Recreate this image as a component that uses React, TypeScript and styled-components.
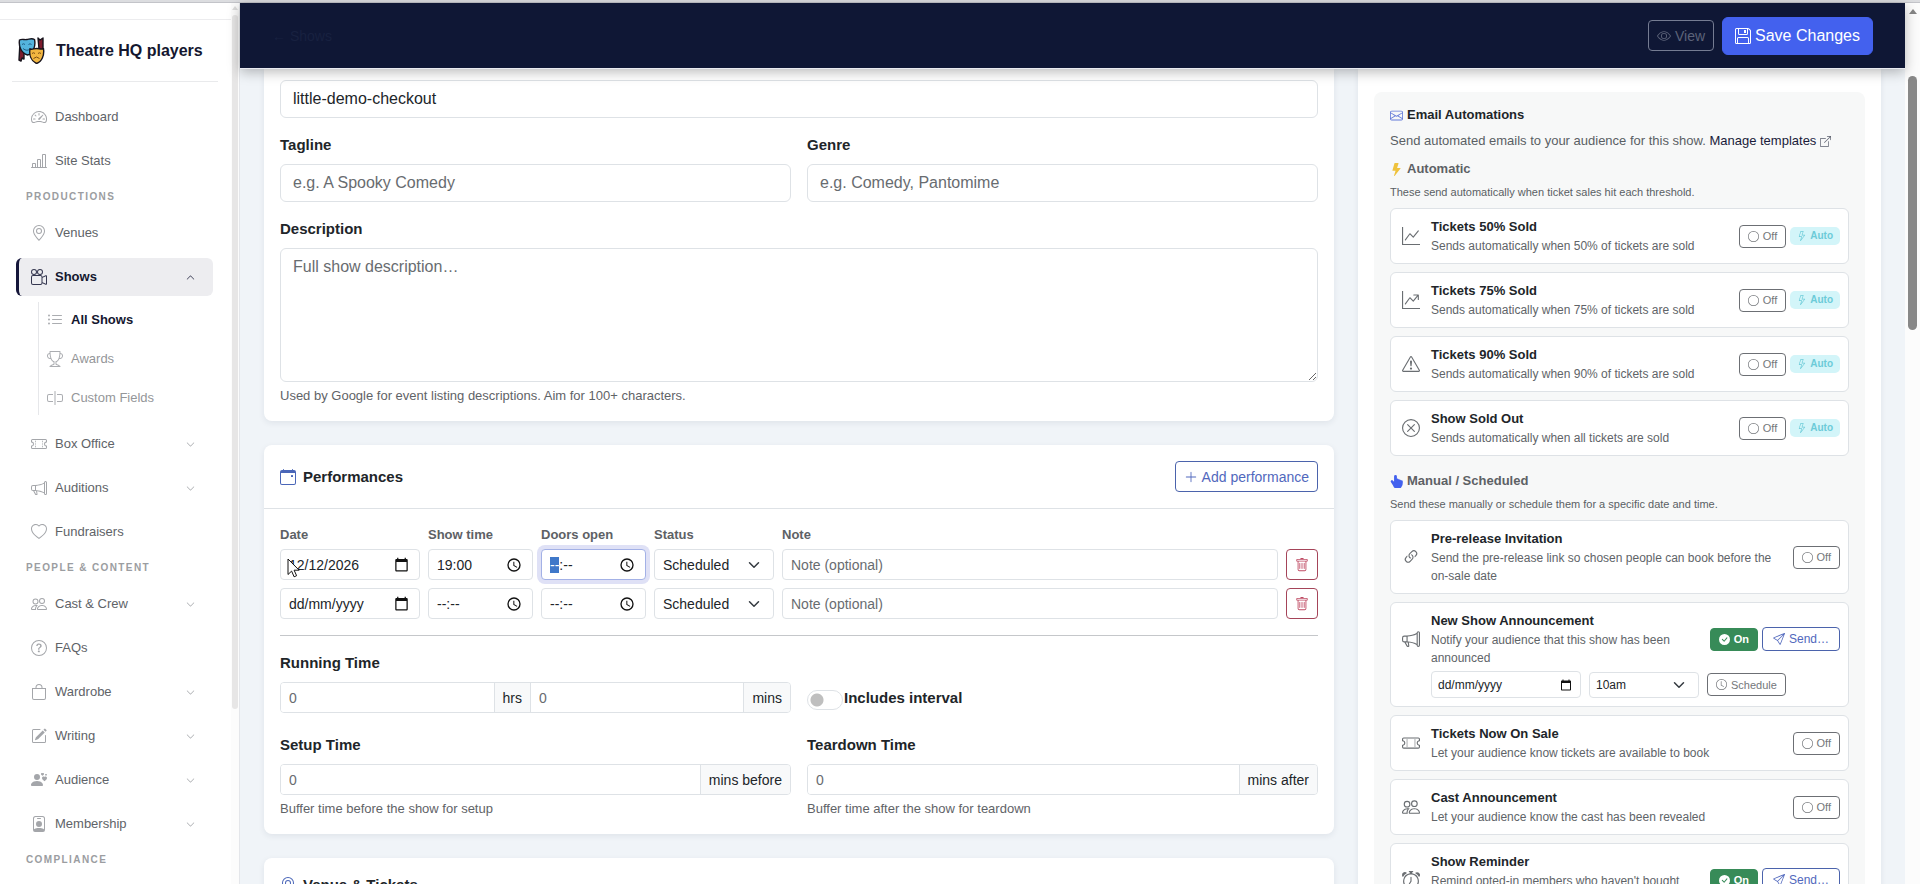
import React, { useEffect, useRef } from 'react';
import styled, { createGlobalStyle, css } from 'styled-components';
import type { IconType } from 'react-icons';
import {
  BsAlarm, BsBag, BsBarChartLine, BsBoxArrowUpRight, BsCalendarEvent, BsCameraReels, BsCheckCircleFill,
  BsChevronDown, BsChevronUp, BsCircle, BsClock, BsEnvelope, BsExclamationTriangle, BsEye, BsFloppy,
  BsGeoAlt, BsGraphUp, BsGraphUpArrow, BsHandIndexThumbFill, BsHeart, BsInputCursor, BsLightning,
  BsLightningFill, BsLink45Deg, BsListUl, BsMegaphone, BsPencilSquare, BsPeople, BsPersonBadge,
  BsPersonHearts, BsPlusLg, BsQuestionCircle, BsSend, BsSpeedometer2, BsTicketPerforated, BsTrash,
  BsTrophy, BsXCircle,
} from 'react-icons/bs';

const c = {
  navy: '#0f1735',
  blue: '#4361ee',
  ink: '#212529',
  muted: '#5a5f64',
  line: '#dee2e6',
  page: '#f0f4f8',
};

const GlobalStyle = createGlobalStyle`
  *, *::before, *::after { box-sizing: border-box; }
  body { margin: 0; background: ${c.page}; color: ${c.ink}; font-family: "Liberation Sans", Arial, sans-serif; font-size: 16px; line-height: 24px; overflow: hidden; }
  button, input, select, textarea { font-family: inherit; color: inherit; margin: 0; }
  button { cursor: pointer; }
  h1, h2, h3, p, ul { margin: 0; padding: 0; }
  ul { list-style: none; }
  svg { display: block; flex: none; }
`;

/* ---------- page frame ---------- */
const Shell = styled.div`
  height: 100vh;
  display: flex;
  flex-direction: column;
  overflow: hidden;
`;
const WindowEdge = styled.div`
  flex: none;
  height: 3px;
  background: #dcdde0;
  border-bottom: 1px solid #c3c4c9;
`;
const Columns = styled.div`
  flex: 1;
  min-height: 0;
  display: flex;
`;
const Main = styled.main`
  flex: 1;
  min-width: 0;
  display: flex;
  flex-direction: column;
`;

/* ---------- scroll indicators ---------- */
const Track = styled.div<{ $wide?: boolean }>`
  flex: none;
  width: ${p => (p.$wide ? 15 : 8)}px;
  background: #fcfcfc;
  display: flex;
  flex-direction: column;
  align-items: center;
  padding-top: ${p => (p.$wide ? 6 : 3)}px;
`;
const Arrow = styled.span<{ $wide?: boolean }>`
  border: solid transparent;
  border-width: 0 ${p => (p.$wide ? '4px 5px' : '3px 4px')};
  border-bottom-color: ${p => (p.$wide ? '#858585' : '#dcdcdc')};
`;
const Thumb = styled.span<{ $wide?: boolean }>`
  width: ${p => (p.$wide ? 9 : 6)}px;
  height: ${p => (p.$wide ? '29%' : '79%')};
  margin-top: ${p => (p.$wide ? 62 : 5)}px;
  border-radius: 5px;
  background: ${p => (p.$wide ? '#888888' : '#e7e6e6')};
`;

/* ---------- sidebar ---------- */
const Sidebar = styled.aside`
  flex: none;
  width: 240px;
  display: flex;
  background: #fff;
  border-right: 1px solid #e4e6ea;
`;
const SideBody = styled.div`
  flex: 1;
  min-width: 0;
  overflow: hidden;
  padding-top: 16px;
`;
const Brand = styled.h1`
  display: flex;
  align-items: center;
  gap: 11px;
  height: 62px;
  padding-left: 6px;
  margin: 0 13px 0 12px;
  border-bottom: 1px solid #e9eaec;
  font-size: 16px;
  color: #14172f;
`;
const BrandRule = styled.div`
  height: 1px;
  background: #ececee;
`;
const NavList = styled.ul`
  display: flex;
  flex-direction: column;
  gap: 6px;
  padding: 16px 18px 0 16px;
`;
const NavLink = styled.a<{ $active?: boolean }>`
  display: flex;
  align-items: center;
  gap: 8px;
  height: 38px;
  padding: 0 18px 0 12px;
  border-left: 3px solid transparent;
  border-radius: 6px;
  font-size: 13px;
  color: #606368;
  text-decoration: none;
  svg { color: #a4a6aa; }
  ${p => p.$active && css`
    background: #ededf0;
    border-left-color: #15163a;
    color: #14172f;
    font-weight: bold;
    svg { color: #34364f; }
  `}
`;
const NavText = styled.span`
  flex: 1;
`;
const NavHeading = styled.li`
  padding-left: 10px;
  font-size: 10px;
  line-height: 22px;
  font-weight: bold;
  letter-spacing: 0.14em;
  text-transform: uppercase;
  color: #9b9da1;
`;
const SubList = styled.ul`
  display: flex;
  flex-direction: column;
  gap: 4px;
  margin: 6px 0 4px 22px;
  padding-left: 8px;
  border-left: 1px solid #e6e7ea;
`;
const SubLink = styled.a<{ $active?: boolean }>`
  display: flex;
  align-items: center;
  gap: 8px;
  height: 35px;
  font-size: 13px;
  color: ${p => (p.$active ? '#14172f' : '#949699')};
  font-weight: ${p => (p.$active ? 'bold' : 'normal')};
  text-decoration: none;
  svg { color: #abadb1; }
`;

/* ---------- header bar ---------- */
const TopBar = styled.header`
  position: relative;
  z-index: 1;
  flex: none;
  display: flex;
  align-items: center;
  justify-content: space-between;
  height: 66px;
  padding: 0 32px;
  background: ${c.navy};
  border-bottom: 1px solid #e8eaf0;
  box-shadow: 0 3px 12px rgba(0, 0, 0, 0.28);
`;
const Crumb = styled.a`
  font-size: 14px;
  color: #182140;
  text-decoration: none;
`;
const Actions = styled.div`
  display: flex;
  align-items: center;
  gap: 8px;
`;
type Tone = 'ghost' | 'solid' | 'blue' | 'red' | 'gray' | 'green';
const tones: Record<Tone, [string, string, string]> = {
  ghost: ['#5c6379', '#757c92', 'transparent'],
  solid: ['#ffffff', c.blue, c.blue],
  blue: ['#5168bd', '#4b63ac', '#fff'],
  red: ['#bf4a63', '#a54459', '#fff'],
  gray: ['#74777b', '#6c6f74', '#fff'],
  green: ['#ffffff', '#378b58', '#378b58'],
};
const Button = styled.button<{ $tone: Tone; $size: 'lg' | 'md' | 'sm' | 'xs' }>`
  display: inline-flex;
  align-items: center;
  justify-content: center;
  gap: 4px;
  flex: none;
  white-space: nowrap;
  color: ${p => tones[p.$tone][0]};
  border: 1px solid ${p => tones[p.$tone][1]};
  background: ${p => tones[p.$tone][2]};
  font-weight: ${p => (p.$tone === 'green' ? 'bold' : 'normal')};
  ${p => p.$size === 'lg' && css`height: 38px; padding: 0 12px; font-size: 16px; border-radius: 6px;`}
  ${p => p.$size === 'md' && css`height: 31px; padding: 0 8px; font-size: 14px; border-radius: 4px;`}
  ${p => p.$size === 'sm' && css`height: 24px; padding: 0 10px; font-size: 12px; border-radius: 4px;`}
  ${p => p.$size === 'xs' && css`height: 23px; padding: 0 8px; font-size: 11px; border-radius: 4px;`}
`;

/* ---------- content ---------- */
const Scroll = styled.div`
  flex: 1;
  min-height: 0;
  overflow: hidden;
  padding: 0 12px;
`;
const Row = styled.div`
  display: flex;
  align-items: flex-start;
`;
const FormColumn = styled.div`
  flex: 0 0 66.6667%;
  min-width: 0;
  padding: 0 12px;
  display: flex;
  flex-direction: column;
  gap: 24px;
`;
const SideColumn = styled.div`
  flex: 1;
  min-width: 0;
  padding: 0 12px;
`;
const Card = styled.section<{ $open?: boolean }>`
  background: #fff;
  border-radius: ${p => (p.$open ? '0 0 8px 8px' : '8px')};
  box-shadow: 0 2px 6px rgba(30, 40, 60, 0.08);
`;
const CardHeader = styled.div`
  display: flex;
  align-items: center;
  gap: 7px;
  padding: 16px;
  border-bottom: 1px solid ${c.line};
  > svg { color: #4a66b8; }
`;
const CardTitle = styled.h2`
  flex: 1;
  font-size: 15px;
  line-height: 22px;
`;
const CardBody = styled.div<{ $top?: number }>`
  padding: ${p => p.$top ?? 16}px 16px 16px;
`;
const Split = styled.div`
  display: grid;
  grid-template-columns: 1fr 1fr;
  column-gap: 16px;
  margin: 16px 0;
`;
const Field = styled.div`
  display: flex;
  flex-direction: column;
`;
const Label = styled.label`
  margin-bottom: 8px;
  font-size: 15px;
  line-height: 22px;
  font-weight: bold;
`;
const Help = styled.p`
  margin-top: 4px;
  font-size: 13px;
  line-height: 19px;
  color: #5f6367;
`;
const box = css`
  width: 100%;
  min-width: 0;
  background: #fff;
  border: 1px solid ${c.line};
  outline: none;
  &::placeholder { color: #686c70; opacity: 1; }
`;
const Input = styled.input`
  ${box}
  height: 38px;
  padding: 0 12px;
  border-radius: 6px;
  font-size: 16px;
`;
const Area = styled.textarea`
  ${box}
  display: block;
  height: 134px;
  padding: 6px 12px;
  border-radius: 6px;
  font-size: 16px;
  line-height: 24px;
  resize: vertical;
`;
const SmallInput = styled.input<{ $mini?: boolean }>`
  ${box}
  height: ${p => (p.$mini ? 27 : 31)}px;
  padding: 0 ${p => (p.$mini ? 6 : 8)}px;
  border-radius: 4px;
  font-size: ${p => (p.$mini ? 12 : 14)}px;
  &:focus { border-color: #a3b1e6; box-shadow: 0 0 0 4px #dfe1f6; }
  &::selection { background: #3f78c9; color: #fff; }
`;
const SmallSelect = styled.select<{ $mini?: boolean }>`
  ${box}
  appearance: none;
  height: ${p => (p.$mini ? 26 : 31)}px;
  padding: 0 ${p => (p.$mini ? 6 : 8)}px;
  border-radius: 4px;
  font-size: ${p => (p.$mini ? 12 : 14)}px;
`;
/* stacks a control and its trailing glyph in one grid cell */
const Stack = styled.div<{ $inset?: number; $width?: number }>`
  position: relative;
  display: grid;
  align-items: center;
  ${p => p.$width && css`width: ${p.$width}px; flex: none;`}
  > input, > select { grid-area: 1 / 1; }
  > svg { grid-area: 1 / 1; justify-self: end; margin-right: ${p => p.$inset ?? 11}px; pointer-events: none; }
`;
const Pointer = styled.span`
  position: absolute;
  left: 7px;
  top: 9px;
  pointer-events: none;
`;
const PerfGrid = styled.div`
  display: grid;
  grid-template-columns: 140px 105px 105px 120px minmax(0, 1fr) 32px;
  gap: 8px;
`;
const PerfHead = styled(PerfGrid)`
  margin-bottom: 4px;
`;
const PerfLabel = styled.label`
  font-size: 13px;
  line-height: 20px;
  font-weight: bold;
  color: #5d6165;
`;
const PerfRow = styled(PerfGrid)`
  margin-bottom: 8px;
`;
const Rule = styled.hr`
  margin: 16px 0;
  border: 0;
  border-top: 1px solid #c5c7ca;
`;
const Group = styled.div`
  display: flex;
  border: 1px solid ${c.line};
  border-radius: 4px;
  overflow: hidden;
`;
const GroupInput = styled.input`
  flex: 1;
  min-width: 0;
  height: 29px;
  padding: 0 8px;
  border: 0;
  outline: none;
  background: #fff;
  font-size: 14px;
  &::placeholder { color: #686c70; opacity: 1; }
`;
const Addon = styled.span`
  display: flex;
  align-items: center;
  padding: 0 8px;
  border: solid ${c.line};
  border-width: 0 1px;
  background: #f8f9fa;
  font-size: 14px;
  &:last-child { border-right: 0; }
`;
const TimeRow = styled.div`
  display: grid;
  grid-template-columns: 1fr 1fr;
  column-gap: 16px;
`;
const SwitchLine = styled.div`
  display: flex;
  align-items: center;
  gap: 1px;
  padding: 33px 0 24px;
`;
const Switch = styled.input`
  appearance: none;
  flex: none;
  width: 36px;
  height: 20px;
  margin: 5px 0 0;
  border: 1px solid ${c.line};
  border-radius: 10px;
  background: radial-gradient(circle at 9px 9px, #bfbfbf 6px, #fff 7px);
`;
const SwitchLabel = styled.label`
  font-size: 15px;
  line-height: 24px;
  font-weight: bold;
`;

/* ---------- automations ---------- */
const Panel = styled.div`
  padding: 13px 16px;
  border-radius: 8px;
  background: #f7f8f8;
`;
const PanelTitle = styled.h2<{ $muted?: boolean; $gap?: number; $icon?: string }>`
  display: flex;
  align-items: center;
  gap: 4px;
  margin-top: ${p => p.$gap ?? 0}px;
  font-size: 13px;
  line-height: 20px;
  color: ${p => (p.$muted ? '#5d6165' : c.ink)};
  svg { color: ${p => p.$icon}; }
`;
const PanelText = styled.p`
  margin: 6px 0 8px;
  font-size: 13px;
  line-height: 20px;
  color: ${c.muted};
`;
const PanelLink = styled.a`
  display: inline-flex;
  align-items: center;
  gap: 4px;
  color: #191b3a;
  text-decoration: none;
  svg { color: #5b5f6d; }
`;
const PanelHint = styled.p`
  margin: 4px 0 7px;
  font-size: 11px;
  line-height: 18px;
  color: ${c.muted};
`;
const AutoList = styled.ul`
  display: flex;
  flex-direction: column;
  gap: 8px;
`;
const AutoCard = styled.li`
  padding: 8px;
  border: 1px solid ${c.line};
  border-radius: 6px;
  background: #fff;
`;
const AutoLine = styled.div`
  display: flex;
  align-items: center;
`;
const AutoIcon = styled.span`
  flex: none;
  width: 24px;
  margin-right: 8px;
  display: flex;
  justify-content: center;
  color: #6a6e72;
`;
const AutoText = styled.div`
  flex: 1;
  min-width: 0;
`;
const AutoName = styled.h3`
  font-size: 13px;
  line-height: 20px;
`;
const AutoDesc = styled.p`
  font-size: 12px;
  line-height: 18px;
  color: #606468;
`;
const AutoActions = styled.div`
  display: flex;
  align-items: center;
  gap: 4px;
  margin-left: 8px;
`;
const Badge = styled.span`
  display: flex;
  align-items: center;
  gap: 3px;
  height: 18px;
  padding: 0 7px;
  border-radius: 5px;
  background: #d3f5f9;
  color: #6ccbd8;
  font-size: 10px;
  line-height: 18px;
  font-weight: bold;
`;
const Schedule = styled.div`
  display: flex;
  align-items: center;
  gap: 8px;
  margin: 4px 0 0 32px;
`;

/* ---------- drawings ---------- */
const Masks = () => (
  <svg width="27" height="27" viewBox="0 0 27 27" aria-hidden="true">
    <path d="M2 5l4 2v15l-2-1-1 3-2-1zM20 1l2 2 3-2v13l-4-2z" fill="#7d1b2c" stroke="#17131c" strokeWidth="1.4" strokeLinejoin="round" />
    <path d="M1.5 3C4 1.500 6 3 9 2.500S14 1 16.500 2.500C18 9 15 17 9.500 18 3 16 .5 9 1.500 3z" fill="#54b4de" stroke="#17131c" strokeWidth="1.400" />
    <path d="M4 7.500q1.500-1.500 3 0M10.500 7.500q1.500-1.500 3 0M5 11.500q4 3.500 7.500 0" fill="none" stroke="#1f5f86" strokeWidth="1" />
    <path d="M12 12c2 .8 4-.5 6.500-.5s4 1 7 .3c1 6-1.500 13-7 14.700C13 24 11 18 12 12z" fill="#f2b640" stroke="#17131c" strokeWidth="1.400" />
    <path d="M14 16.500q1.500-1.500 3 0M20 16.500q1.500-1.500 3 0M15.500 21.500q3-3 6 0" fill="none" stroke="#7c4f12" strokeWidth="1" />
  </svg>
);
const CalendarGlyph = ({ size = 15 }: { size?: number }) => (
  <svg width={size} height={size} viewBox="0 0 24 24" fill="#111" aria-hidden="true">
    <path d="M20 3h-1V1h-2v2H7V1H5v2H4c-1.100 0-2 .9-2 2v16c0 1.100.9 2 2 2h16c1.100 0 2-.9 2-2V5c0-1.100-.9-2-2-2zm0 18H4V8h16v13z" />
  </svg>
);
const ClockGlyph = () => (
  <svg width="16" height="16" viewBox="0 0 24 24" fill="#111" aria-hidden="true">
    <path d="M12 2a10 10 0 1 0 0 20 10 10 0 0 0 0-20zm0 18a8 8 0 1 1 0-16 8 8 0 0 1 0 16z" />
    <path d="M12.500 7H11v6l5.250 3.150.75-1.230-4.500-2.670z" />
  </svg>
);
const Caret = () => (
  <svg width="16" height="12" viewBox="0 0 16 16" fill="none" stroke="#343a40" strokeWidth="2" strokeLinecap="round" strokeLinejoin="round" aria-hidden="true">
    <path d="m2 5 6 6 6-6" />
  </svg>
);
const ArrowCursor = () => (
  <svg width="13" height="20" viewBox="0 0 13 20" aria-hidden="true">
    <path d="M1 1v15.500l3.600-3.400 2.500 5.700 2.500-1.100-2.500-5.500h5z" fill="#fff" stroke="#111" strokeWidth="1" strokeLinejoin="round" />
  </svg>
);

/* ---------- data ---------- */
type NavEntry = { label: string; icon?: IconType; menu?: boolean };
const navTop: NavEntry[] = [
  { label: 'Dashboard', icon: BsSpeedometer2 },
  { label: 'Site Stats', icon: BsBarChartLine },
  { label: 'Productions' },
  { label: 'Venues', icon: BsGeoAlt },
];
const navSub: NavEntry[] = [
  { label: 'All Shows', icon: BsListUl },
  { label: 'Awards', icon: BsTrophy },
  { label: 'Custom Fields', icon: BsInputCursor },
];
const navRest: NavEntry[] = [
  { label: 'Box Office', icon: BsTicketPerforated, menu: true },
  { label: 'Auditions', icon: BsMegaphone, menu: true },
  { label: 'Fundraisers', icon: BsHeart },
  { label: 'People & Content' },
  { label: 'Cast & Crew', icon: BsPeople, menu: true },
  { label: 'FAQs', icon: BsQuestionCircle },
  { label: 'Wardrobe', icon: BsBag, menu: true },
  { label: 'Writing', icon: BsPencilSquare, menu: true },
  { label: 'Audience', icon: BsPersonHearts, menu: true },
  { label: 'Membership', icon: BsPersonBadge, menu: true },
  { label: 'Compliance' },
];
const automatic: { name: string; desc: string; icon: IconType }[] = [
  { name: 'Tickets 50% Sold', desc: 'Sends automatically when 50% of tickets are sold', icon: BsGraphUp },
  { name: 'Tickets 75% Sold', desc: 'Sends automatically when 75% of tickets are sold', icon: BsGraphUpArrow },
  { name: 'Tickets 90% Sold', desc: 'Sends automatically when 90% of tickets are sold', icon: BsExclamationTriangle },
  { name: 'Show Sold Out', desc: 'Sends automatically when all tickets are sold', icon: BsXCircle },
];
const manual: { name: string; desc: string; icon: IconType; on?: boolean; schedule?: boolean }[] = [
  { name: 'Pre-release Invitation', desc: 'Send the pre-release link so chosen people can book before the on-sale date', icon: BsLink45Deg },
  { name: 'New Show Announcement', desc: 'Notify your audience that this show has been announced', icon: BsMegaphone, on: true, schedule: true },
  { name: 'Tickets Now On Sale', desc: 'Let your audience know tickets are available to book', icon: BsTicketPerforated },
  { name: 'Cast Announcement', desc: 'Let your audience know the cast has been revealed', icon: BsPeople },
  { name: 'Show Reminder', desc: "Remind opted-in members who haven't bought tickets yet", icon: BsAlarm, on: true, schedule: true },
];
const performances = [
  { date: '12/12/2026', time: '19:00' },
  { date: 'dd/mm/yyyy', time: '--:--' },
];

/* ---------- parts ---------- */
const NavItem = ({ label, icon: Icon, menu }: NavEntry) =>
  Icon ? (
    <li>
      <NavLink href="#">
        <Icon size={16} />
        <NavText>{label}</NavText>
        {menu && <BsChevronDown size={9} />}
      </NavLink>
    </li>
  ) : (
    <NavHeading>{label}</NavHeading>
  );

const OffButton = () => (
  <Button type="button" $tone="gray" $size="xs"><BsCircle size={11} />Off</Button>
);

export default function App() {
  const doors = useRef<HTMLInputElement>(null);
  useEffect(() => {
    doors.current?.focus({ preventScroll: true });
    doors.current?.setSelectionRange(0, 2);
  }, []);

  return (
    <Shell>
      <GlobalStyle />
      <WindowEdge />
      <Columns>
        <Sidebar>
          <SideBody>
            <BrandRule />
            <Brand><Masks />Theatre HQ players</Brand>
            <nav>
              <NavList>
                {navTop.map(n => <NavItem key={n.label} {...n} />)}
                <li>
                  <NavLink href="#" $active>
                    <BsCameraReels size={16} />
                    <NavText>Shows</NavText>
                    <BsChevronUp size={9} />
                  </NavLink>
                  <SubList>
                    {navSub.map(({ label, icon: Icon }, i) => (
                      <li key={label}>
                        <SubLink href="#" $active={i === 0}>{Icon && <Icon size={16} />}{label}</SubLink>
                      </li>
                    ))}
                  </SubList>
                </li>
                {navRest.map(n => <NavItem key={n.label} {...n} />)}
              </NavList>
            </nav>
          </SideBody>
          <Track><Arrow /><Thumb /></Track>
        </Sidebar>

        <Main>
          <TopBar>
            <Crumb href="#">← Shows</Crumb>
            <Actions>
              <Button type="button" $tone="ghost" $size="md"><BsEye size={14} />View</Button>
              <Button type="button" $tone="solid" $size="lg"><BsFloppy size={16} />Save Changes</Button>
            </Actions>
          </TopBar>
          <Scroll>
            <Row>
              <FormColumn>
                <Card $open>
                  <CardBody $top={11}>
                    <Input aria-label="Slug" defaultValue="little-demo-checkout" />
                    <Split>
                      <Field>
                        <Label htmlFor="tagline">Tagline</Label>
                        <Input id="tagline" placeholder="e.g. A Spooky Comedy" />
                      </Field>
                      <Field>
                        <Label htmlFor="genre">Genre</Label>
                        <Input id="genre" placeholder="e.g. Comedy, Pantomime" />
                      </Field>
                    </Split>
                    <Field>
                      <Label htmlFor="description">Description</Label>
                      <Area id="description" placeholder="Full show description…" />
                      <Help>Used by Google for event listing descriptions. Aim for 100+ characters.</Help>
                    </Field>
                  </CardBody>
                </Card>

                <Card>
                  <CardHeader>
                    <BsCalendarEvent size={16} />
                    <CardTitle>Performances</CardTitle>
                    <Button type="button" $tone="blue" $size="md"><BsPlusLg size={14} />Add performance</Button>
                  </CardHeader>
                  <CardBody>
                    <PerfHead>
                      <PerfLabel htmlFor="date-0">Date</PerfLabel>
                      <PerfLabel htmlFor="time-0">Show time</PerfLabel>
                      <PerfLabel htmlFor="doors-0">Doors open</PerfLabel>
                      <PerfLabel htmlFor="status-0">Status</PerfLabel>
                      <PerfLabel htmlFor="note-0">Note</PerfLabel>
                    </PerfHead>
                    {performances.map((p, i) => (
                      <PerfRow key={i}>
                        <Stack>
                          <SmallInput id={`date-${i}`} aria-label="Date" defaultValue={p.date} />
                          <CalendarGlyph />
                          {i === 0 && <Pointer><ArrowCursor /></Pointer>}
                        </Stack>
                        <Stack>
                          <SmallInput id={`time-${i}`} aria-label="Show time" defaultValue={p.time} />
                          <ClockGlyph />
                        </Stack>
                        <Stack>
                          <SmallInput id={`doors-${i}`} aria-label="Doors open" ref={i === 0 ? doors : undefined} defaultValue="--:--" />
                          <ClockGlyph />
                        </Stack>
                        <Stack $inset={12}>
                          <SmallSelect id={`status-${i}`} aria-label="Status"><option>Scheduled</option></SmallSelect>
                          <Caret />
                        </Stack>
                        <SmallInput id={`note-${i}`} aria-label="Note" placeholder="Note (optional)" />
                        <Button type="button" $tone="red" $size="md" aria-label="Remove performance"><BsTrash size={14} /></Button>
                      </PerfRow>
                    ))}
                    <Rule />
                    <TimeRow>
                      <Field>
                        <Label htmlFor="run-hours">Running Time</Label>
                        <Group>
                          <GroupInput id="run-hours" placeholder="0" />
                          <Addon>hrs</Addon>
                          <GroupInput aria-label="Running time minutes" placeholder="0" />
                          <Addon>mins</Addon>
                        </Group>
                      </Field>
                      <SwitchLine>
                        <Switch id="interval" type="checkbox" />
                        <SwitchLabel htmlFor="interval">Includes interval</SwitchLabel>
                      </SwitchLine>
                    </TimeRow>
                    <TimeRow>
                      <Field>
                        <Label htmlFor="setup">Setup Time</Label>
                        <Group>
                          <GroupInput id="setup" placeholder="0" />
                          <Addon>mins before</Addon>
                        </Group>
                        <Help>Buffer time before the show for setup</Help>
                      </Field>
                      <Field>
                        <Label htmlFor="teardown">Teardown Time</Label>
                        <Group>
                          <GroupInput id="teardown" placeholder="0" />
                          <Addon>mins after</Addon>
                        </Group>
                        <Help>Buffer time after the show for teardown</Help>
                      </Field>
                    </TimeRow>
                  </CardBody>
                </Card>

                <Card>
                  <CardHeader>
                    <BsGeoAlt size={16} />
                    <CardTitle>Venue &amp; Tickets</CardTitle>
                  </CardHeader>
                </Card>
              </FormColumn>

              <SideColumn>
                <Card $open>
                  <CardBody $top={23}>
                    <Panel>
                      <PanelTitle $icon="#6279d8"><BsEnvelope size={13} />Email Automations</PanelTitle>
                      <PanelText>
                        Send automated emails to your audience for this show.{' '}
                        <PanelLink href="#">Manage templates <BsBoxArrowUpRight size={11} /></PanelLink>
                      </PanelText>
                      <PanelTitle $muted $icon="#efc23c"><BsLightningFill size={13} />Automatic</PanelTitle>
                      <PanelHint>These send automatically when ticket sales hit each threshold.</PanelHint>
                      <AutoList>
                        {automatic.map(({ name, desc, icon: Icon }) => (
                          <AutoCard key={name}>
                            <AutoLine>
                              <AutoIcon><Icon size={18} /></AutoIcon>
                              <AutoText>
                                <AutoName>{name}</AutoName>
                                <AutoDesc>{desc}</AutoDesc>
                              </AutoText>
                              <AutoActions>
                                <OffButton />
                                <Badge><BsLightning size={10} />Auto</Badge>
                              </AutoActions>
                            </AutoLine>
                          </AutoCard>
                        ))}
                      </AutoList>
                      <PanelTitle $muted $gap={15} $icon={c.blue}><BsHandIndexThumbFill size={13} />Manual / Scheduled</PanelTitle>
                      <PanelHint>Send these manually or schedule them for a specific date and time.</PanelHint>
                      <AutoList>
                        {manual.map(({ name, desc, icon: Icon, on, schedule }) => (
                          <AutoCard key={name}>
                            <AutoLine>
                              <AutoIcon><Icon size={18} /></AutoIcon>
                              <AutoText>
                                <AutoName>{name}</AutoName>
                                <AutoDesc>{desc}</AutoDesc>
                              </AutoText>
                              <AutoActions>
                                {on ? (
                                  <>
                                    <Button type="button" $tone="green" $size="xs"><BsCheckCircleFill size={11} />On</Button>
                                    <Button type="button" $tone="blue" $size="sm"><BsSend size={12} />Send…</Button>
                                  </>
                                ) : (
                                  <OffButton />
                                )}
                              </AutoActions>
                            </AutoLine>
                            {schedule && (
                              <Schedule>
                                <Stack $width={150} $inset={9}>
                                  <SmallInput $mini aria-label={`${name} date`} defaultValue="dd/mm/yyyy" />
                                  <CalendarGlyph size={12} />
                                </Stack>
                                <Stack $width={110} $inset={12}>
                                  <SmallSelect $mini aria-label={`${name} time`}><option>10am</option></SmallSelect>
                                  <Caret />
                                </Stack>
                                <Button type="button" $tone="gray" $size="xs"><BsClock size={11} />Schedule</Button>
                              </Schedule>
                            )}
                          </AutoCard>
                        ))}
                      </AutoList>
                    </Panel>
                  </CardBody>
                </Card>
              </SideColumn>
            </Row>
          </Scroll>
        </Main>
        <Track $wide><Arrow $wide /><Thumb $wide /></Track>
      </Columns>
    </Shell>
  );
}
